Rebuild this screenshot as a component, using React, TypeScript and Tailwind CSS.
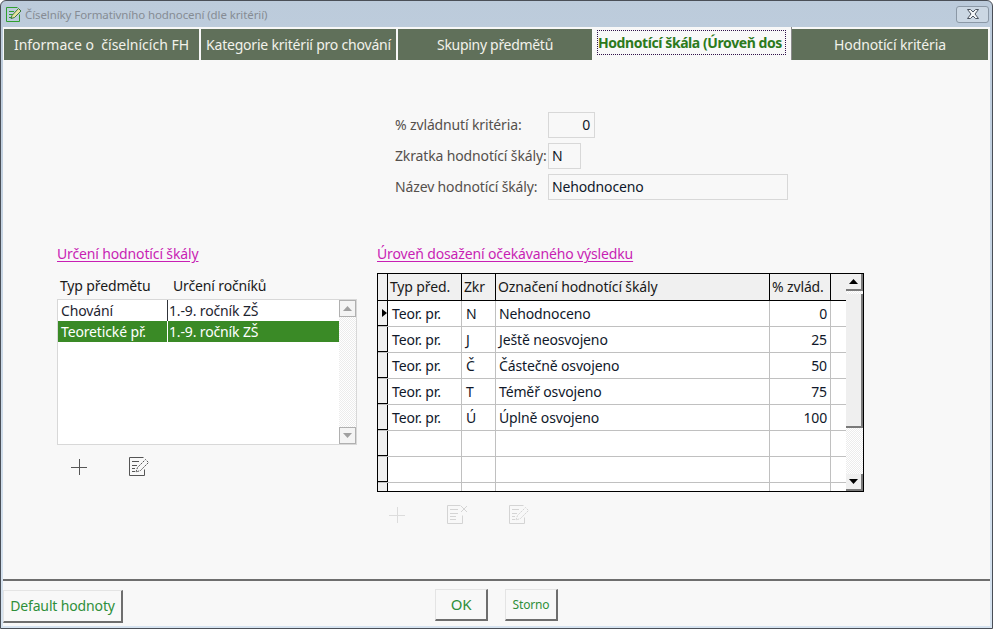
// Číselníky Formativního hodnocení : fenêtre de dialogue avec onglets, liste et grille.
import type { ReactNode } from 'react';

const TABS = [
  { label: 'Informace o  číselnících FH', width: 'w-[195px]', track: 'tracking-normal' },
  { label: 'Kategorie kritérií pro chování', width: 'w-[195px]', track: 'tracking-[-0.2px]' },
  { label: 'Skupiny předmětů', width: 'w-[194px]', track: 'tracking-[-0.3px]' },
];

const ROWS = [
  { typ: 'Teor. pr.', zkr: 'N', nazev: 'Nehodnoceno', pct: '0' },
  { typ: 'Teor. pr.', zkr: 'J', nazev: 'Ještě neosvojeno', pct: '25' },
  { typ: 'Teor. pr.', zkr: 'Č', nazev: 'Částečně osvojeno', pct: '50' },
  { typ: 'Teor. pr.', zkr: 'T', nazev: 'Téměř osvojeno', pct: '75' },
  { typ: 'Teor. pr.', zkr: 'Ú', nazev: 'Úplně osvojeno', pct: '100' },
  { typ: '', zkr: '', nazev: '', pct: '' },
  { typ: '', zkr: '', nazev: '', pct: '' },
  { typ: '', zkr: '', nazev: '', pct: '' },
];

function PlusIcon({ color }: { color: string }) {
  return (
    <svg width="16" height="16" viewBox="0 0 16 16" fill="none" stroke={color} strokeWidth="1">
      <path d="M0 8.5h16M8.5 0v16" />
    </svg>
  );
}

function EditIcon({ color }: { color: string }) {
  return (
    <svg width="21" height="19" viewBox="0 0 21 19" fill="none" stroke={color} strokeWidth="1">
      <path d="M14.5 .5H.5v18h15v-6" />
      <path d="M3 4.5h7M3 8.5h5M3 11.5h3M3 14.5h3" />
      <path d="M7 15l1.5-4.500 8-8 3 3-8 8z" strokeDasharray="2 1" />
    </svg>
  );
}

function DeleteIcon({ color }: { color: string }) {
  return (
    <svg width="21" height="19" viewBox="0 0 21 19" fill="none" stroke={color} strokeWidth="1">
      <path d="M13.500 .5H.5v18h15v-8" />
      <path d="M3 4.500h8M3 8.500h8M3 11.500h6M3 14.500h6" />
      <path d="M14 1l6 6M20 1l-6 6" />
    </svg>
  );
}

function TitleIcon() {
  return (
    <svg width="16" height="15" viewBox="0 0 16 15" fill="none" strokeWidth="1">
      <path d="M11.500 .5H.5v14h13v-7" stroke="#2fa02f" />
      <path d="M3 4.500h5M3 7.500h4M3 10.500h3" stroke="#2fa02f" />
      <path d="M5 11.500l1-3 6.500-7 2.500 2.500-6.500 6.500z" stroke="#3a7a3a" fill="#e8e2a0" />
    </svg>
  );
}

function CloseIcon() {
  return (
    <svg width="12" height="10" viewBox="0 0 12 10" fill="#f4f6f8" stroke="#4c5560" strokeWidth="1">
      <path d="M.5 .5h3L6 3l2.500-2.500h3L8 5l3.500 4.500h-3L6 7 3.500 9.500h-3L4 5z" />
    </svg>
  );
}

function Arrow({ up, color }: { up?: boolean; color: string }) {
  return (
    <svg width="9" height="5" viewBox="0 0 9 5" fill={color}>
      <path d={up ? 'M4.500 0L9 5H0z' : 'M0 0h9L4.500 5z'} />
    </svg>
  );
}

function Field({ label, width, right, children }: { label: string; width: string; right?: boolean; children: ReactNode }) {
  return (
    <div className="flex h-[26px] items-center">
      <span className="w-[153px] shrink-0 whitespace-nowrap text-[#55504c]">{label}</span>
      <div
        className={`${width} ${right ? 'justify-end pr-[4px]' : 'pl-[3px]'} flex h-[26px] items-center border border-[#d8d8d8] text-[#10182a]`}
      >
        {children}
      </div>
    </div>
  );
}

function ActionButton({ label, className }: { label: string; className: string }) {
  return (
    <button
      className={`${className} border border-[#e4e4e4] border-r-2 border-b-2 border-r-[#6e6e6e] border-b-[#6e6e6e] bg-[#f8f8f8] text-[#2f8f3a]`}
    >
      {label}
    </button>
  );
}

export default function App() {
  return (
    <div
      className="flex h-[629px] w-[993px] flex-col rounded-t-[6px] border border-[#4a4f57] bg-gradient-to-b from-[#bccbdb] to-[#d6e3f0] px-[2px] pb-[2px] text-[14px] leading-none tracking-[-0.14px]"
      style={{ fontFamily: '"Noto Sans", "Liberation Sans", sans-serif' }}
    >
      {/* barre de titre */}
      <div className="flex h-[26px] shrink-0 items-center pl-[3px] pr-[1px]">
        <TitleIcon />
        <span className="ml-[3px] mt-px text-[11.5px] tracking-[-0.1px] text-[#868c94]">
          Číselníky Formativního hodnocení (dle kritérií)
        </span>
        <div className="ml-auto flex h-[17px] w-[33px] items-center justify-center rounded-[3px] border border-[#8b98a6] bg-[#cbd7e3]">
          <CloseIcon />
        </div>
      </div>

      {/* onglets */}
      <div className="flex h-[33px] shrink-0 items-end bg-[#f8f8f8] pl-px">
        {TABS.map((tab) => (
          <div
            key={tab.label}
            className={`${tab.width} ${tab.track} mr-[2px] flex h-[31px] shrink-0 items-center justify-center whitespace-pre bg-[#60705a] text-[#f2f2ea]`}
          >
            {tab.label}
          </div>
        ))}
        <div className="-ml-[2px] flex h-[33px] w-[200px] shrink-0 items-start border-r border-[#8a8a8a] pl-[5px] pt-[3px]">
          <div className="flex h-[25px] w-[189px] items-center whitespace-nowrap border border-dotted border-[#30104a] font-bold tracking-[-0.42px] text-[#2c7a1c]">
            Hodnotící škála (Úroveň dos
          </div>
        </div>
        <div className="flex h-[31px] w-[196px] shrink-0 items-center justify-center bg-[#60705a] text-[#f2f2ea]">
          Hodnotící kritéria
        </div>
      </div>

      {/* contenu */}
      <div className="flex min-h-0 flex-1 flex-col bg-[#f8f8f8] pt-[52px]">
        <div className="ml-[392px] flex flex-col gap-[5px]">
          <Field label="% zvládnutí kritéria:" width="w-[47px]" right>
            0
          </Field>
          <Field label="Zkratka hodnotící škály:" width="w-[33px]">
            N
          </Field>
          <Field label="Název hodnotící škály:" width="w-[240px]">
            Nehodnoceno
          </Field>
        </div>

        <div className="mt-[45px] flex items-start pl-[54px]">
          {/* liste de gauche */}
          <div className="w-[300px] shrink-0">
            <div className="mt-[2px] h-[16px]">
              <span className="text-[#c81fb4] underline underline-offset-2">Určení hodnotící škály</span>
            </div>
            <div className="mt-[12px] flex h-[21px] items-center pl-[3px] text-[#1a1a1a]">
              <span className="w-[113px]">Typ předmětu</span>
              <span>Určení ročníků</span>
            </div>
            <div className="mt-[3px] flex h-[146px] border border-[#d8d8d8] bg-white">
              <div className="flex-1">
                <div className="flex h-[21px] items-center text-[#1e2430]">
                  <span className="flex h-full w-[110px] items-center border-r border-[#30343a] pl-[3px]">Chování</span>
                  <span className="pl-px">1.-9. ročník ZŠ</span>
                </div>
                <div className="flex h-[21px] items-center bg-[#3a8a26] text-white">
                  <span className="flex h-full w-[110px] items-center border-r border-white pl-[3px]">Teoretické př.</span>
                  <span className="pl-px">1.-9. ročník ZŠ</span>
                </div>
              </div>
              <div className="flex w-[17px] flex-col justify-between bg-[repeating-conic-gradient(#ececec_0_25%,#ffffff_0_50%)] bg-[length:2px_2px]">
                <div className="flex h-[17px] items-center justify-center border border-[#b0b0b0] bg-[#f4f4f4]">
                  <Arrow up color="#a0a0a0" />
                </div>
                <div className="flex h-[17px] items-center justify-center border border-[#b0b0b0] bg-[#f4f4f4]">
                  <Arrow color="#a0a0a0" />
                </div>
              </div>
            </div>
            <div className="mt-[12px] flex items-center pl-[14px]">
              <PlusIcon color="#555555" />
              <span className="ml-[42px]">
                <EditIcon color="#555555" />
              </span>
            </div>
          </div>

          {/* grille de droite */}
          <div className="ml-[20px] w-[487px] shrink-0">
            <div className="mt-[2px] h-[16px]">
              <span className="text-[#c81fb4] underline underline-offset-2">Úroveň dosažení očekávaného výsledku</span>
            </div>
            <div className="mt-[10px] flex h-[219px] border border-black bg-white">
              <div className="flex min-w-0 flex-1 flex-col overflow-hidden">
                <div className="flex h-[27px] shrink-0 items-center border-b border-black bg-[#f0f0f0] text-[#1a1a1a]">
                  <span className="h-full w-[10px] shrink-0 border-r border-black" />
                  <span className="flex h-full w-[74px] shrink-0 items-center border-r border-black pl-[2px]">Typ před.</span>
                  <span className="flex h-full w-[34px] shrink-0 items-center border-r border-black pl-[2px]">Zkr</span>
                  <span className="flex h-full w-[274px] shrink-0 items-center border-r border-black pl-[2px]">Označení hodnotící škály</span>
                  <span className="flex h-full w-[61px] shrink-0 items-center border-r border-black pl-[2px]">% zvlád.</span>
                </div>
                {ROWS.map((row, i) => (
                  <div key={i} className="flex h-[26px] shrink-0 items-center border-b border-[#c0c0c0] text-[#10182a]">
                    <span className="flex h-full w-[10px] shrink-0 items-center border-r border-b border-r-black border-b-black bg-[#f0f0f0]">
                      {i === 0 && <span className="ml-[4px] border-y-[4px] border-l-[5px] border-y-transparent border-l-black" />}
                    </span>
                    <span className="flex h-full w-[74px] shrink-0 items-center border-r border-[#c0c0c0] pl-[4px]">{row.typ}</span>
                    <span className="flex h-full w-[34px] shrink-0 items-center border-r border-[#c0c0c0] pl-[4px]">{row.zkr}</span>
                    <span className="flex h-full w-[274px] shrink-0 items-center border-r border-[#c0c0c0] pl-[3px]">{row.nazev}</span>
                    <span className="flex h-full w-[61px] shrink-0 items-center justify-end border-r border-[#c0c0c0] pr-[3px]">{row.pct}</span>
                  </div>
                ))}
              </div>
              <div className="flex w-[17px] shrink-0 flex-col bg-[repeating-conic-gradient(#ececec_0_25%,#ffffff_0_50%)] bg-[length:2px_2px]">
                <div className="flex h-[17px] shrink-0 items-center justify-center border-r-2 border-b-2 border-[#7a7a7a] bg-[#f0f0f0]">
                  <Arrow up color="#000000" />
                </div>
                <div className="mt-[3px] h-[134px] shrink-0 border-r-2 border-b-2 border-[#7a7a7a] bg-[#efefef]" />
                <div className="mt-auto flex h-[17px] shrink-0 items-center justify-center border-r-2 border-b-2 border-[#7a7a7a] bg-[#f0f0f0]">
                  <Arrow color="#000000" />
                </div>
              </div>
            </div>
            <div className="mt-[13px] flex items-center pl-[12px]">
              <PlusIcon color="#dcdcdc" />
              <span className="ml-[42px]">
                <DeleteIcon color="#d4d4d4" />
              </span>
              <span className="ml-[41px]">
                <EditIcon color="#d4d4d4" />
              </span>
            </div>
          </div>
        </div>
      </div>

      {/* pied */}
      <div className="flex h-[47px] shrink-0 items-start border-t-2 border-[#6e6e6e] bg-[#f8f8f8] pt-[8px]">
        <ActionButton label="Default hodnoty" className="mt-px h-[33px] w-[120px]" />
        <ActionButton label="OK" className="ml-[312px] h-[32px] w-[53px] text-[15px]" />
        <ActionButton label="Storno" className="ml-[17px] h-[32px] w-[53px] text-[12px]" />
      </div>
    </div>
  );
}
